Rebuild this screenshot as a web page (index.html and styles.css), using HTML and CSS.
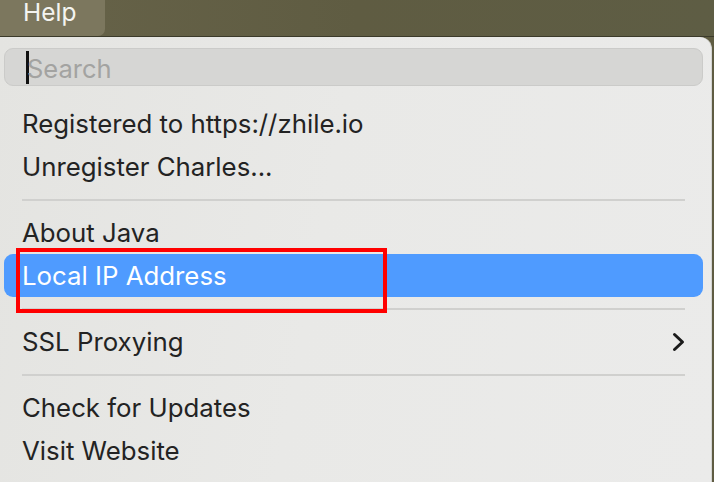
FILE: index.html
```html
<!DOCTYPE html>
<html>
<head>
<meta charset="utf-8">
<link rel="stylesheet" href="styles.css">
</head>
<body>
<div class="screen">
  <div class="menubar">
    <div class="menubar-item active">Help</div>
  </div>
  <div class="menu">
    <div class="search">
      <span class="caret"></span><span class="placeholder">Search</span>
    </div>
    <div class="items">
      <div class="item">Registered to https://zhile.io</div>
      <div class="item">Unregister Charles...</div>
      <div class="sep"></div>
      <div class="item">About Java</div>
      <div class="item selected">Local IP Address</div>
      <div class="sep"></div>
      <div class="item submenu">SSL Proxying
        <svg class="chev" width="14" height="20" viewBox="0 0 14 20"><path d="M2.5 2.5 L10.5 10 L2.5 17.5" fill="none" stroke="#1a1a1a" stroke-width="3" stroke-linecap="round" stroke-linejoin="round"/></svg>
      </div>
      <div class="sep"></div>
      <div class="item">Check for Updates</div>
      <div class="item">Visit Website</div>
    </div>
    <div class="annotation"></div>
  </div>
</div>
</body>
</html>
```

FILE: styles.css
```css
* { box-sizing: border-box; }
html, body { margin: 0; padding: 0; }
body {
  width: 714px;
  height: 482px;
  overflow: hidden;
  font-family: Inter, "Noto Sans", "Liberation Sans", sans-serif;
  background: #5f5c42;
}
.screen { width: 714px; height: 482px; display: flex; flex-direction: column; }
.menubar {
  height: 37px;
  background: linear-gradient(90deg, #676349 0%, #5f5c42 50%, #5e5d44 100%);
  border-bottom: 1px solid #3b3a2a;
  display: flex;
  flex-shrink: 0;
}
.menubar-item {
  width: 105px;
  height: 36px;
  color: #f4f4f0;
  font-size: 24.5px;
  line-height: 24px;
  padding-left: 23px;
  border-bottom-right-radius: 7px;
}
.menubar-item.active { background: #7c775e; }
.menu {
  position: relative;
  width: 712px;
  flex: 1;
  background: linear-gradient(100deg, #e4e4e1 0%, #e9e9e7 45%, #ebebea 100%);
  border-top-right-radius: 12px;
  border-right: 1px solid #d4d4d2;
  padding: 11px 0 0 0;
}
.search {
  margin: 0 8px 0 4px;
  height: 38px;
  border-radius: 9px;
  background: #d6d6d4;
  border: 1px solid #cbcbc9;
  display: flex;
  align-items: center;
  padding-left: 21px;
}
.caret {
  width: 3px;
  height: 33px;
  background: #111;
  margin-right: -2px;
}
.placeholder {
  color: #a3a3a1;
  font-size: 25.5px;
  padding-top: 2px;
}
.items { margin-top: 16px; display: flex; flex-direction: column; }
.item {
  height: 43px;
  margin: 0 8px 0 4px;
  padding-left: 18px;
  padding-right: 18px;
  display: flex;
  align-items: center;
  font-size: 25.8px;
  color: #232323;
  border-radius: 9px;
}
.item.selected { background: #4f9bff; color: #ffffff; }
.item.submenu { justify-content: space-between; padding-right: 17px; }
.chev { display: block; }
.sep {
  height: 23px;
  margin: 0 26px 0 22px;
  padding-top: 11px;
}
.sep::before {
  content: "";
  display: block;
  height: 2px;
  background: #d0d0ce;
}
.annotation {
  position: absolute;
  left: 16px;
  top: 211px;
  width: 371px;
  height: 65px;
  border: 4px solid #ff0000;
}
```
